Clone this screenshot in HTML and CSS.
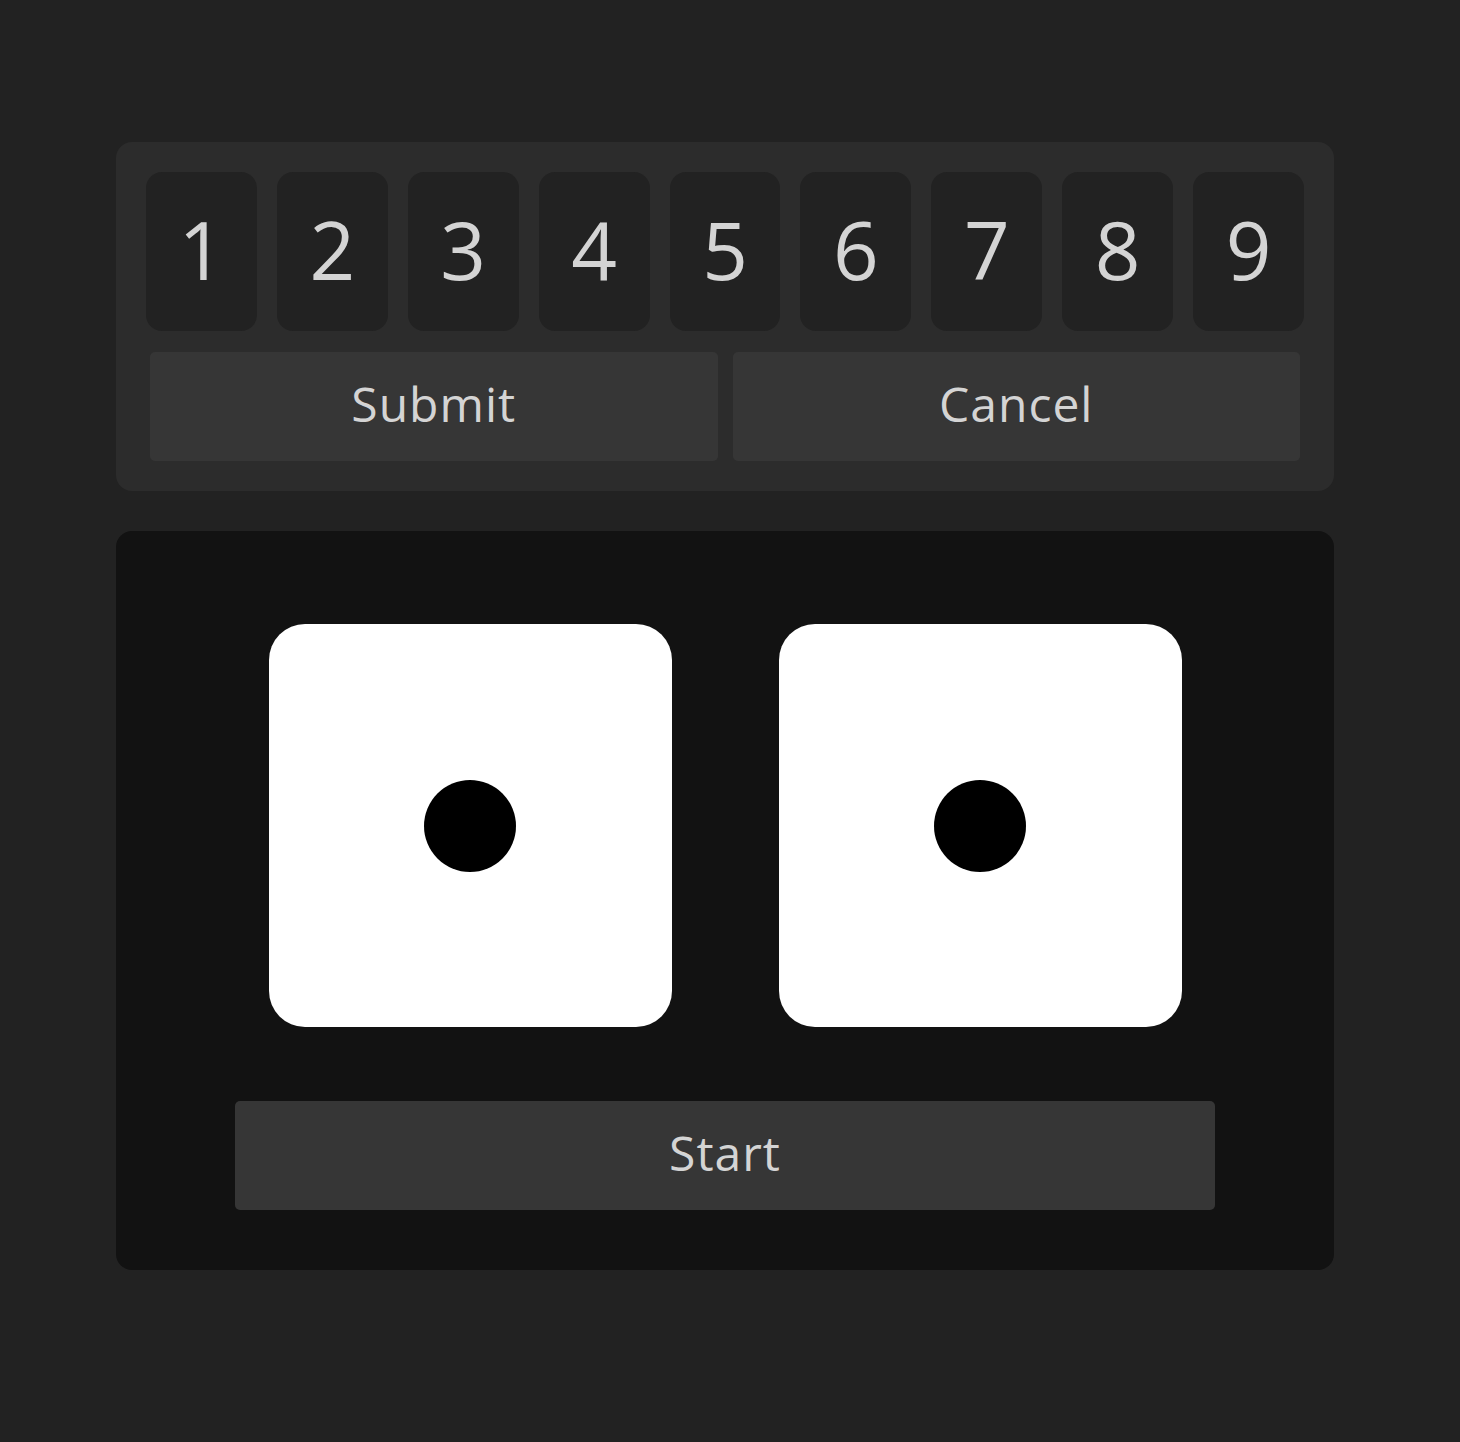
FILE: index.html
```html
<!DOCTYPE html>
<html>
<head>
<meta charset="utf-8">
<link rel="stylesheet" href="styles.css">
</head>
<body>
<main class="app">
  <section class="pad">
    <div class="keys">
      <button class="key">1</button>
      <button class="key">2</button>
      <button class="key">3</button>
      <button class="key">4</button>
      <button class="key">5</button>
      <button class="key">6</button>
      <button class="key">7</button>
      <button class="key">8</button>
      <button class="key">9</button>
    </div>
    <div class="actions">
      <button class="btn">Submit</button>
      <button class="btn">Cancel</button>
    </div>
  </section>
  <section class="board">
    <div class="dice">
      <div class="die"><span class="pip"></span></div>
      <div class="die"><span class="pip"></span></div>
    </div>
    <button class="btn start">Start</button>
  </section>
</main>
</body>
</html>
```
FILE: styles.css
```css
* { box-sizing: border-box; }
html, body { margin: 0; padding: 0; }
body {
  background: #222222;
  font-family: "Open Sans", "Liberation Sans", sans-serif;
  color: #d4d4d4;
  min-height: 1442px;
}
.app {
  width: 1218px;
  margin-left: 116px;
  padding-top: 142px;
  display: flex;
  flex-direction: column;
  gap: 40px;
}
button {
  font-family: inherit;
  color: #d4d4d4;
  border: none;
  cursor: pointer;
}
.pad {
  background: #2c2c2c;
  border-radius: 16px;
  padding: 30px;
  display: flex;
  flex-direction: column;
  gap: 21px;
}
.keys {
  display: flex;
  gap: 20px;
}
.key {
  flex: 1;
  height: 159px;
  background: #222222;
  border-radius: 16px;
  font-size: 80px;
  font-weight: 400;
  padding: 0 0 6px 0;
  line-height: 1;
  display: flex;
  align-items: center;
  justify-content: center;
}
.actions {
  display: flex;
  gap: 15px;
  padding: 0 4px;
}
.btn {
  flex: 1;
  height: 109px;
  background: #363636;
  border-radius: 5px;
  font-size: 48px;
  font-weight: 400;
  letter-spacing: 1px;
  line-height: 1;
  padding: 0 0 6px 0;
}
.board {
  background: #121212;
  border-radius: 16px;
  height: 739px;
  padding-top: 93px;
  display: flex;
  flex-direction: column;
  align-items: center;
}
.dice {
  display: flex;
  gap: 107px;
}
.die {
  width: 403px;
  height: 403px;
  background: #ffffff;
  border-radius: 36px;
  display: flex;
  align-items: center;
  justify-content: center;
}
.pip {
  width: 92px;
  height: 92px;
  border-radius: 50%;
  background: #000000;
}
.start {
  flex: none;
  width: 980px;
  margin-top: 74px;
}
```
